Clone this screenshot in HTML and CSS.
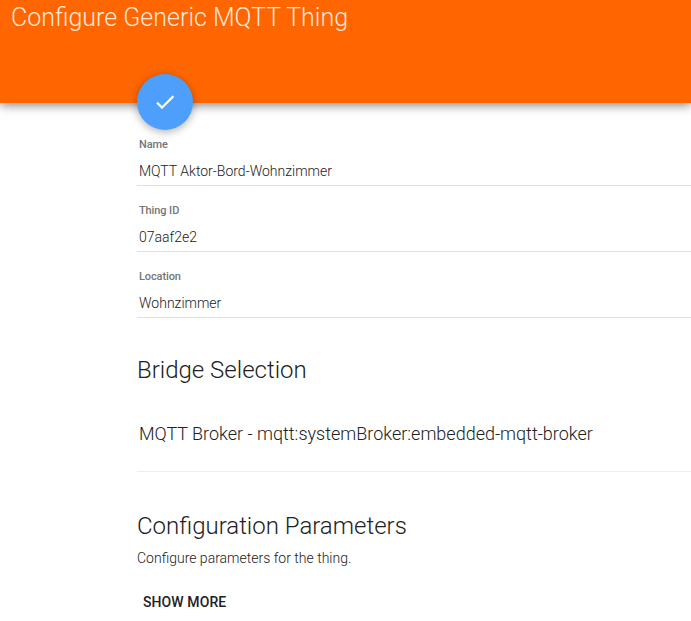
FILE: index.html
```html
<!DOCTYPE html>
<html lang="en">
<head>
<meta charset="utf-8">
<title>Configure Generic MQTT Thing</title>
<link rel="stylesheet" href="styles.css">
</head>
<body>
<header class="header">
  <h1 class="title">Configure Generic MQTT Thing</h1>
  <button class="fab" aria-label="Save">
    <svg viewBox="0 0 24 24" width="24" height="24"><path fill="currentColor" stroke="currentColor" stroke-width=".3" d="M9 16.2L4.8 12l-1.4 1.4L9 19 21 7l-1.4-1.4z"/></svg>
  </button>
</header>
<main class="content">
  <div class="field"><div class="label">Name</div><div class="value">MQTT Aktor-Bord-Wohnzimmer</div></div>
  <div class="field"><div class="label">Thing ID</div><div class="value">07aaf2e2</div></div>
  <div class="field"><div class="label">Location</div><div class="value">Wohnzimmer</div></div>
  <h2 class="heading bridge">Bridge Selection</h2>
  <div class="select">MQTT Broker - mqtt:systemBroker:embedded-mqtt-broker</div>
  <h2 class="heading config">Configuration Parameters</h2>
  <p class="hint">Configure parameters for the thing.</p>
  <button class="more">SHOW MORE</button>
</main>
</body>
</html>
```

FILE: styles.css
```css
* { box-sizing: border-box; }
body {
  margin: 0;
  height: 621px;
  overflow: hidden;
  background: #fff;
  color: #212121;
  font: 300 14px/20px Roboto, sans-serif;
}
.header {
  position: relative;
  height: 103px;
  padding: 2px 11px 0;
  background: #ff6600;
  box-shadow: 0 2px 10px rgba(0, 0, 0, .5);
}
.title {
  margin: 0;
  color: rgba(255, 255, 255, .87);
  font-size: 25px;
  line-height: 32px;
  font-weight: 300;
}
.fab {
  position: absolute;
  left: 137px;
  bottom: -27px;
  display: grid;
  place-items: center;
  width: 56px;
  height: 56px;
  padding: 0;
  border: 0;
  border-radius: 50%;
  background: #4d9ffb;
  color: #fff;
  box-shadow: 0 2px 8px rgba(0, 0, 0, .32);
}
.content { padding: 34px 0 0 137px; }
.field {
  height: 50px;
  margin-bottom: 16px;
  padding-left: 2px;
  border-bottom: 1px solid #e0e0e0;
}
.field:first-child { height: 49px; }
.field + .field { padding-top: 1px; }
.label {
  color: #757575;
  font-size: 11px;
  line-height: 16px;
  font-weight: 500;
  letter-spacing: -.1px;
}
.value { margin-top: 8px; }
.heading {
  margin: 0;
  font-size: 24px;
  line-height: 32px;
  font-weight: 300;
}
.bridge { margin-top: 36px; }
.select {
  height: 74px;
  margin-top: 12px;
  padding: 24px 2px;
  border-bottom: 1px solid #eee;
  font-size: 18px;
  line-height: 24px;
}
.config { margin-top: 38px; }
.hint { margin: 6px 0 0; }
.more {
  display: block;
  margin: 20px 0 0;
  padding: 4px 6px;
  border: 0;
  background: none;
  color: #212121;
  font: 500 14px/20px Roboto, sans-serif;
  letter-spacing: .1px;
}
```
